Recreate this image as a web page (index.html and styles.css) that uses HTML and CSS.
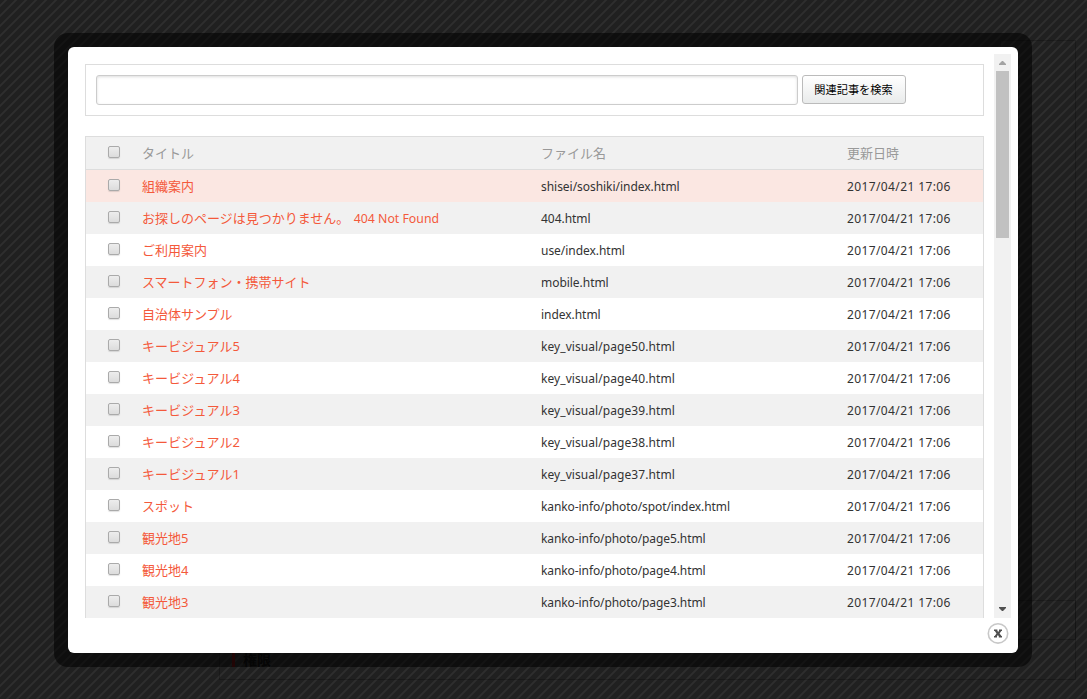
FILE: index.html
```
<!DOCTYPE html>
<html lang="ja">
<head>
<meta charset="utf-8">
<title>関連記事を検索</title>
<link rel="stylesheet" href="styles.css">
</head>
<body>
<div class="page-box left"></div><div class="page-box right"></div>
<div class="behind">権限</div>
<main class="modal">
  <div class="content">
    <div class="list">
      <form class="search"><input class="query" type="text"><button class="submit" type="button">関連記事を検索</button></form>
      <div class="table">
        <div class="row head"><i class="check"></i><span>タイトル</span><span>ファイル名</span><span>更新日時</span></div>
        <div class="row active"><i class="check"></i><a>組織案内</a><span class="file">shisei/soshiki/index.html</span><time>2017/04/21 17:06</time></div>
        <div class="row"><i class="check"></i><a>お探しのページは見つかりません。 <b class="latin">404 Not Found</b></a><span class="file">404.html</span><time>2017/04/21 17:06</time></div>
        <div class="row"><i class="check"></i><a>ご利用案内</a><span class="file">use/index.html</span><time>2017/04/21 17:06</time></div>
        <div class="row"><i class="check"></i><a>スマートフォン・携帯サイト</a><span class="file">mobile.html</span><time>2017/04/21 17:06</time></div>
        <div class="row"><i class="check"></i><a>自治体サンプル</a><span class="file">index.html</span><time>2017/04/21 17:06</time></div>
        <div class="row"><i class="check"></i><a class="kana">キービジュアル5</a><span class="file numbered">key_visual/page50.html</span><time>2017/04/21 17:06</time></div>
        <div class="row"><i class="check"></i><a class="kana">キービジュアル4</a><span class="file numbered">key_visual/page40.html</span><time>2017/04/21 17:06</time></div>
        <div class="row"><i class="check"></i><a class="kana">キービジュアル3</a><span class="file numbered">key_visual/page39.html</span><time>2017/04/21 17:06</time></div>
        <div class="row"><i class="check"></i><a class="kana">キービジュアル2</a><span class="file numbered">key_visual/page38.html</span><time>2017/04/21 17:06</time></div>
        <div class="row"><i class="check"></i><a class="kana">キービジュアル1</a><span class="file numbered">key_visual/page37.html</span><time>2017/04/21 17:06</time></div>
        <div class="row"><i class="check"></i><a>スポット</a><span class="file photo">kanko-info/photo/spot/index.html</span><time>2017/04/21 17:06</time></div>
        <div class="row"><i class="check"></i><a>観光地5</a><span class="file photo">kanko-info/photo/page5.html</span><time>2017/04/21 17:06</time></div>
        <div class="row"><i class="check"></i><a>観光地4</a><span class="file photo">kanko-info/photo/page4.html</span><time>2017/04/21 17:06</time></div>
        <div class="row"><i class="check"></i><a>観光地3</a><span class="file photo">kanko-info/photo/page3.html</span><time>2017/04/21 17:06</time></div>
      </div>
    </div>
    <div class="scrollbar">
      <svg class="arrow" width="17" height="17" viewBox="0 0 17 17"><path d="M5 11h7v-1L9 7H8L5 10z" fill="#a3a3a3"/></svg>
      <div class="thumb"></div>
      <svg class="arrow" width="17" height="17" viewBox="0 0 17 17"><path d="M5 6h7v1L9 10H8L5 7z" fill="#505050"/></svg>
    </div>
  </div>
  <div class="footer">
    <svg class="close" width="22" height="22" viewBox="0 0 22 22"><circle cx="11" cy="11.4" r="9.7" fill="#fff" stroke="#c8c8c8" stroke-width="1.6"/><path d="M7 7.5h3.4v1.3l.8 1.1.8-1.1V7.5h3v1.6h-.7l-1.7 2.3 1.9 2.5h.5v1.6h-3.2v-1.3l-.9-1.2-.9 1.2v1.3H7v-1.6h.7l1.8-2.5-1.7-2.3H7z" fill="#505050"/></svg>
  </div>
</main>
</body>
</html>
```
FILE: styles.css
```
* { box-sizing: border-box; }
body {
  margin: 0;
  width: 1087px;
  height: 699px;
  overflow: hidden;
  padding: 33px 54px;
  background: linear-gradient(135deg, #202020 21%, #2e2e2e 26%, #2e2e2e 34%, #202020 39%, #202020 71%, #2e2e2e 76%, #2e2e2e 84%, #202020 89%) 0 0 / 10px 10px;
  font: 13px/32px "Noto Sans", "Noto Sans CJK JP", sans-serif;
  color: #333;
}
.page-box { position: absolute; border: 1px solid rgba(0, 0, 0, .2); }
.page-box.left { left: 219px; top: 600px; width: 857px; height: 80px; }
.page-box.right { left: 1000px; top: 40px; width: 76px; height: 600px; }
.behind {
  position: absolute;
  left: 232px;
  top: 653px;
  height: 14px;
  padding-left: 8px;
  border-left: 3px solid #4a0c0c;
  color: #0c0c0c;
  font-weight: bold;
  font-size: 14px;
  line-height: 14px;
}
.modal {
  position: relative;
  isolation: isolate;
  width: 978px;
  height: 634px;
  border: 14px solid transparent;
  border-radius: 14px;
  background: rgba(0, 0, 0, .55) border-box;
  padding: 7px 7px 0 17px;
}
.modal::before {
  content: "";
  position: absolute;
  inset: 0;
  z-index: -1;
  border-radius: 6px;
  background: #fff;
}
.content { display: flex; justify-content: space-between; height: 564px; overflow: hidden; }
.list { width: 899px; padding-top: 10px; }
.search {
  display: flex;
  gap: 4px;
  height: 52px;
  padding: 10px;
  border: 1px solid #ddd;
}
.query {
  width: 702px;
  height: 30px;
  border: 1px solid #ccc;
  border-radius: 3px;
  box-shadow: inset 0 1px 3px #ddd;
}
.submit {
  width: 104px;
  height: 29px;
  padding: 0 1px 1px 0;
  border: 1px solid #bbb;
  border-radius: 3px;
  background: linear-gradient(#fff, #e9ebeb);
  color: #000;
  font: 11.2px "Noto Sans CJK JP", sans-serif;
}
.table { margin-top: 20px; border: 1px solid #ddd; }
.row {
  display: grid;
  grid-template-columns: 56px 399px 306px 1fr;
  height: 32px;
  background: #fff;
  white-space: nowrap;
}
.row:nth-child(odd) { background: #f1f1f1; }
.row.head { height: 33px; border-bottom: 1px solid #ddd; color: #999; background: #f1f1f1; }
.row.active { background: #fbe7e2; }
.row a { color: #f4593b; }
.row .kana { letter-spacing: .12px; }
.latin { margin-left: 1px; font-size: 12.3px; font-weight: 400; }
.file, time { padding-top: 1px; font-size: 12px; }
.file { letter-spacing: -.04px; }
.file.numbered { letter-spacing: .07px; }
.file.photo { letter-spacing: -.09px; }
time { letter-spacing: .38px; }
.check {
  width: 12px;
  height: 12px;
  margin: 9px 0 0 22px;
  border: 1px solid #aaa;
  border-radius: 2px;
  background: linear-gradient(#ededed, #dcdcdc);
  box-shadow: 0 1px 1px rgba(0, 0, 0, .12);
}
.scrollbar { width: 17px; display: flex; flex-direction: column; background: #f1f1f1; }
.thumb { width: 13px; height: 167px; margin: 0 2px auto; background: #c1c1c1; }
.arrow { display: block; flex: none; }
.footer { display: flex; justify-content: flex-end; padding: 4px 2px 0 0; }
.close { display: block; }
```
